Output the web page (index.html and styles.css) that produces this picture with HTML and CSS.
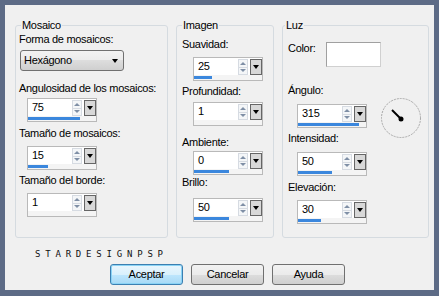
FILE: index.html
```html
<!DOCTYPE html>
<html lang="es">
<head>
    <meta charset="UTF-8">
    <title>Mosaico</title>
    <link rel="stylesheet" href="styles.css">
</head>
<body>
<div class="dialog">
    <div class="groups">
        <fieldset class="group group-mosaic">
            <legend>Mosaico</legend>
            <div class="label">Forma de mosaicos:</div>
            <div class="select">Hexágono<span class="select-arrow"></span></div>
            <div class="label mt10">Angulosidad de los mosaicos:</div>
            <div class="spin mt3">
                <div class="spin-main"><span class="spin-value">75</span><span class="spin-arrows"><i class="up"></i><i class="down"></i></span><span class="spin-drop"></span></div>
                <div class="spin-track"><div class="spin-fill" style="width:52px"></div></div>
            </div>
            <div class="label mt4">Tamaño de mosaicos:</div>
            <div class="spin mt6">
                <div class="spin-main"><span class="spin-value">15</span><span class="spin-arrows"><i class="up"></i><i class="down"></i></span><span class="spin-drop"></span></div>
                <div class="spin-track"><div class="spin-fill" style="width:20px"></div></div>
            </div>
            <div class="label mt3">Tamaño del borde:</div>
            <div class="spin mt6">
                <div class="spin-main"><span class="spin-value">1</span><span class="spin-arrows"><i class="up"></i><i class="down"></i></span><span class="spin-drop"></span></div>
                <div class="spin-track"><div class="spin-fill" style="width:0px"></div></div>
            </div>
        </fieldset>
        <fieldset class="group group-image">
            <legend>Imagen</legend>
            <div class="label mt5">Suavidad:</div>
            <div class="spin mt6">
                <div class="spin-main"><span class="spin-value">25</span><span class="spin-arrows"><i class="up"></i><i class="down"></i></span><span class="spin-drop"></span></div>
                <div class="spin-track"><div class="spin-fill" style="width:18px"></div></div>
            </div>
            <div class="label mt3">Profundidad:</div>
            <div class="spin mt4">
                <div class="spin-main"><span class="spin-value">1</span><span class="spin-arrows"><i class="up"></i><i class="down"></i></span><span class="spin-drop"></span></div>
                <div class="spin-track"><div class="spin-fill" style="width:0px"></div></div>
            </div>
            <div class="label mt9">Ambiente:</div>
            <div class="spin mt2">
                <div class="spin-main"><span class="spin-value">0</span><span class="spin-arrows"><i class="up"></i><i class="down"></i></span><span class="spin-drop"></span></div>
                <div class="spin-track"><div class="spin-fill" style="width:35px"></div></div>
            </div>
            <div class="label">Brillo:</div>
            <div class="spin mt9">
                <div class="spin-main"><span class="spin-value">50</span><span class="spin-arrows"><i class="up"></i><i class="down"></i></span><span class="spin-drop"></span></div>
                <div class="spin-track"><div class="spin-fill" style="width:35px"></div></div>
            </div>
        </fieldset>
        <fieldset class="group group-light">
            <legend>Luz</legend>
            <div class="color-row">
                <span class="label">Color:</span>
                <span class="color-box"></span>
            </div>
            <div class="label mt16">Ángulo:</div>
            <div class="angle-row">
                <div class="spin">
                    <div class="spin-main"><span class="spin-value">315</span><span class="spin-arrows"><i class="up"></i><i class="down"></i></span><span class="spin-drop"></span></div>
                    <div class="spin-track"><div class="spin-fill" style="width:61px"></div></div>
                </div>
                <svg class="dial" width="40" height="40" viewBox="0 0 40 40">
                    <circle cx="20" cy="20" r="19.5" fill="none" stroke="#a8a8a8" stroke-width="1" stroke-dasharray="2 1"/>
                    <line x1="11" y1="12" x2="20" y2="21" stroke="#000" stroke-width="2"/>
                    <circle cx="20" cy="21" r="2.5" fill="#000"/>
                </svg>
            </div>
            <div class="label mt3">Intensidad:</div>
            <div class="spin mt7">
                <div class="spin-main"><span class="spin-value">50</span><span class="spin-arrows"><i class="up"></i><i class="down"></i></span><span class="spin-drop"></span></div>
                <div class="spin-track"><div class="spin-fill" style="width:34px"></div></div>
            </div>
            <div class="label mt4">Elevación:</div>
            <div class="spin mt6">
                <div class="spin-main"><span class="spin-value">30</span><span class="spin-arrows"><i class="up"></i><i class="down"></i></span><span class="spin-drop"></span></div>
                <div class="spin-track"><div class="spin-fill" style="width:23px"></div></div>
            </div>
        </fieldset>
    </div>
    <div class="brand">STARDESIGNPSP</div>
    <div class="buttons">
        <span class="btn btn-default">Aceptar</span>
        <span class="btn">Cancelar</span>
        <span class="btn">Ayuda</span>
    </div>
</div>
</body>
</html>
```
FILE: styles.css
```css
body{margin:0;background:#5d6b86;font-family:"Liberation Sans",Arial,sans-serif;font-size:11px;letter-spacing:-0.3px;color:#000;}
.dialog{margin:5px 5px 6px 5px;height:285px;box-sizing:border-box;padding:13px 0 0 10px;background:#f0f0f0;}

.groups{display:flex;gap:8px;}
.group{margin:0;height:220px;box-sizing:border-box;min-width:0;border:1px solid #d5dbe0;border-radius:3px;padding:0 4px;}
.group legend{padding:0 1px;line-height:14px;}
.group-mosaic{width:153px;padding-left:3px;}
.group-mosaic legend{margin-left:2px;}
.group-image{width:98px;padding-left:5px;}
.group-image legend{margin-left:0;}
.group-light{width:147px;padding-left:5px;}
.group-light legend{margin-left:-3px;}

.label{line-height:14px;white-space:nowrap;}
.mt2{margin-top:2px;}
.mt3{margin-top:3px;}
.mt4{margin-top:4px;}
.mt5{margin-top:5px;}
.mt6{margin-top:6px;}
.mt7{margin-top:7px;}
.mt9{margin-top:9px;}
.mt10{margin-top:10px;}
.mt16{margin-top:16px;}

.select{position:relative;margin:4px 0 0 1px;width:104px;height:21px;box-sizing:border-box;border:1px solid #707070;border-radius:3px;padding-left:3px;line-height:19px;background:linear-gradient(#f2f2f2 0,#ebebeb 50%,#dddddd 50%,#cfcfcf 100%);}
.select-arrow{position:absolute;right:5px;top:8px;border-left:3.5px solid transparent;border-right:3.5px solid transparent;border-top:4px solid #000;}

.spin{width:70px;height:24px;box-sizing:border-box;border:1px solid #b9b9b9;background:#fff;}
.group-mosaic .spin{margin-left:8px;}
.group-image .spin{margin-left:11px;}
.group-light .spin{margin-left:9px;}
.spin-main{display:flex;align-items:flex-start;height:17px;}
.spin-value{flex:1;padding-left:4px;line-height:17px;}
.spin-arrows{display:flex;flex-direction:column;width:10px;height:16px;margin-top:1px;box-sizing:border-box;border:1px solid #d6dbe2;background:#f4f6f8;}
.spin-arrows i{flex:1;display:flex;align-items:center;justify-content:center;}
.spin-arrows i::after{content:"";border-left:3px solid transparent;border-right:3px solid transparent;}
.spin-arrows .up{border-bottom:1px solid #d6dbe2;}
.spin-arrows .up::after{border-bottom:3px solid #7f8fa6;}
.spin-arrows .down::after{border-top:3px solid #7f8fa6;}
.spin-drop{display:flex;align-items:center;justify-content:center;width:12px;height:16px;margin:1px 0 0 2px;box-sizing:border-box;border:1px solid #666;background:#d8d8d8;}
.spin-drop::after{content:"";border-left:3.5px solid transparent;border-right:3.5px solid transparent;border-top:4px solid #000;}
.spin-track{height:5px;padding-top:1px;box-sizing:border-box;background:#f4f4f4;}
.spin-fill{height:3px;background:#3b87dd;}

.color-row{display:flex;align-items:flex-start;gap:0;margin-top:10px;}
.color-row .label{width:38px;margin-top:-1px;}
.color-box{width:55px;height:25px;box-sizing:border-box;border:1px solid #d0d0d0;border-top-color:#a0a0a0;border-left-color:#a0a0a0;background:#fff;}

.angle-row{display:flex;align-items:flex-start;margin-top:1px;}
.angle-row .spin{margin-top:6px;}
.dial{margin:0 0 -10px 14px;}

.brand{margin:12px 0 0 20px;height:8px;font:9px "DejaVu Sans Mono",monospace;line-height:8px;letter-spacing:4.8px;color:#111;}

.buttons{display:flex;gap:8px;margin-top:6px;padding-left:95px;}
.btn{width:73px;height:21px;box-sizing:border-box;border:1px solid #707070;border-radius:3px;text-align:center;line-height:19px;background:linear-gradient(#f2f2f2 0,#ebebeb 50%,#dddddd 50%,#cfcfcf 100%);}
.btn-default{border-color:#3c7fb1;background:linear-gradient(#eaf6fd 0,#d9f0fc 50%,#bee6fd 50%,#a7d9f5 100%);box-shadow:inset 0 0 0 1px #8ad3f5;}
```
